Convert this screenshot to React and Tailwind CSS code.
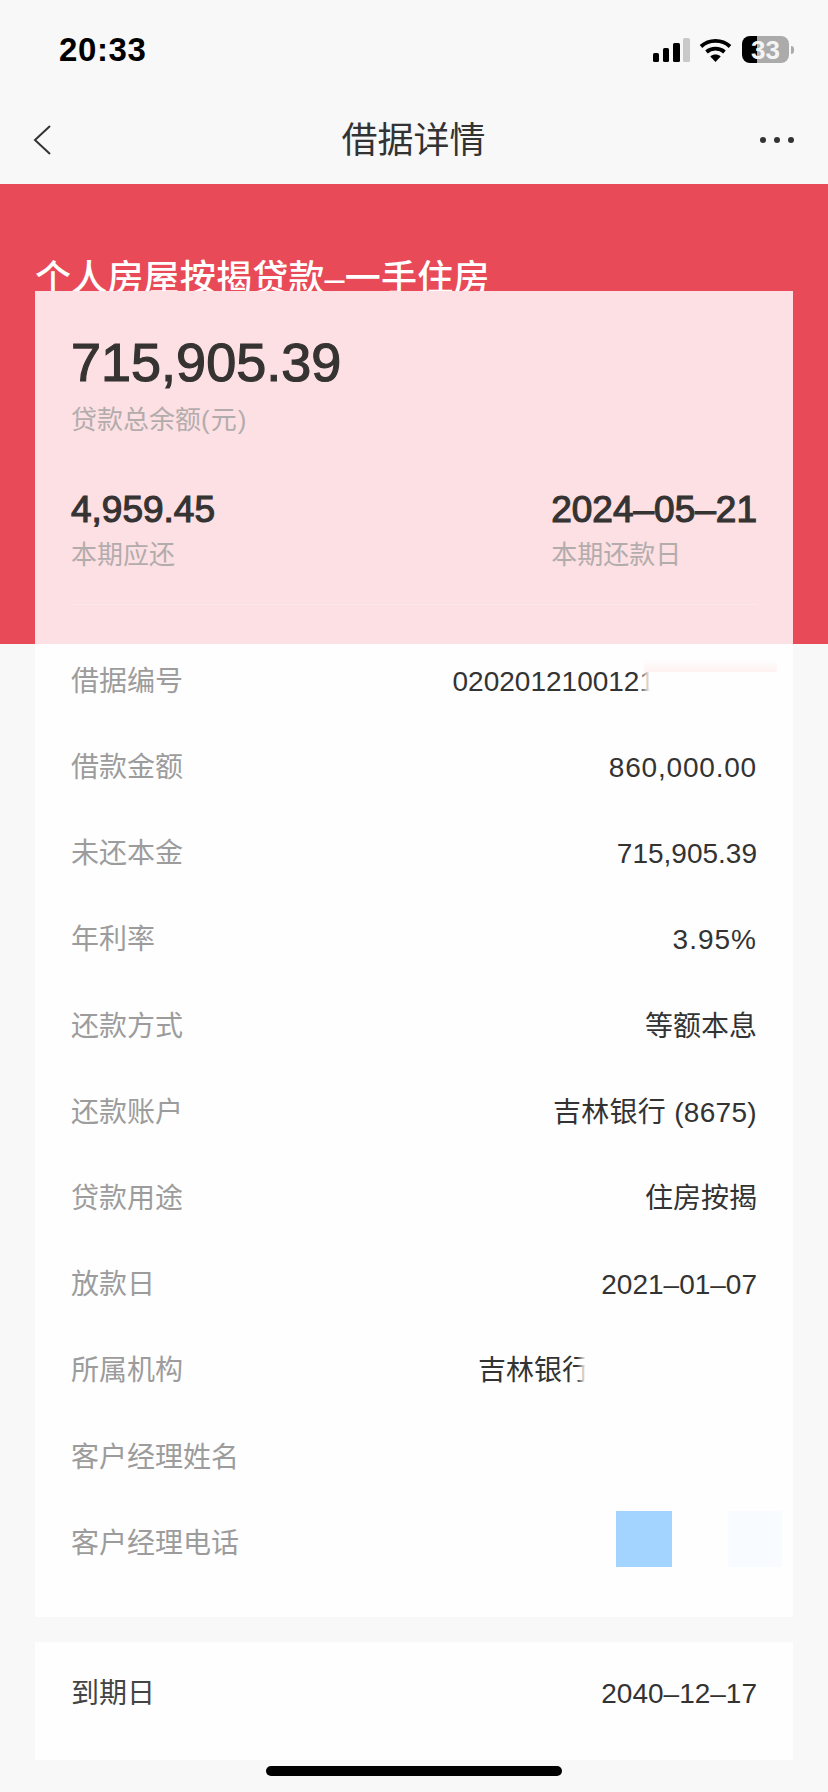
const FONT = "font-['Liberation_Sans','Noto_Sans_CJK_SC',sans-serif]";
const AMOUNT = "font-normal text-[#363333] [-webkit-text-stroke:1.2px_#363333]";

function Row({ label, children, first = false }) {
  return (
    <div className={`relative flex items-center justify-between ${first ? "h-[80px] pb-[4px]" : "h-[86.2px] pt-[2px]"}`}>
      <span className="text-[28px] leading-[40px] text-[#9c9c9c]">{label}</span>
      {children}
    </div>
  );
}

function Value({ children, className = "" }) {
  return <span className={`text-[28px] leading-[40px] text-[#333] ${className}`}>{children}</span>;
}

function Wifi() {
  return (
    <svg width="33" height="24" viewBox="0 0 33 24" fill="none" stroke="#000" strokeWidth="3.8">
      <path d="M2 8.5C10 1 23 1 31 8.5" />
      <path d="M7.5 14C12.5 9.6 20.5 9.6 25.5 14" />
      <path d="M16.5 24l-5.2-5.6c3-2.4 7.4-2.4 10.4 0z" fill="#000" stroke="none" />
    </svg>
  );
}

function Signal() {
  return (
    <svg width="37" height="24" viewBox="0 0 37 24">
      <rect x="0" y="15" width="6" height="9" rx="1.5" fill="#000" />
      <rect x="10" y="10" width="6" height="14" rx="1.5" fill="#000" />
      <rect x="20" y="5" width="7" height="19" rx="1.5" fill="#000" />
      <rect x="30" y="0" width="7" height="24" rx="1.5" fill="#c9c9c9" />
    </svg>
  );
}

export default function App() {
  return (
    <div className={`${FONT} relative h-[1792px] w-[828px] overflow-hidden bg-[#f8f8f8]`}>
      {/* status bar */}
      <div className="flex h-[96px] items-center justify-between pl-[59px] pr-[34px] pt-[3px]">
        <span className="text-[33px] font-bold leading-[40px] tracking-[0.6px] text-black">20:33</span>
        <div className="flex items-center">
          <Signal />
          <div className="ml-[9px]"><Wifi /></div>
          <div className="ml-[10px] flex h-[27px] w-[47px] items-center justify-center rounded-[8px] bg-[linear-gradient(90deg,#000_15px,#ababab_15px)] text-[26px] font-bold leading-none text-[#f4f4f4]">
            33
          </div>
          <div className="ml-[2px] h-[8px] w-[3px] rounded-r-[3px] bg-[#ababab]" />
        </div>
      </div>

      {/* nav */}
      <div className="flex h-[88px] items-center pl-[33px] pr-[34px]">
        <div className="flex-1">
          <svg className="block" width="18" height="30" viewBox="0 0 18 30" fill="none" stroke="#333" strokeWidth="2">
            <path d="M17 1L2 15l15 14" />
          </svg>
        </div>
        <span className="pt-[2px] text-[36px] leading-[48px] text-[#333]">借据详情</span>
        <div className="flex flex-1 justify-end gap-[8px]">
          <span className="h-[6px] w-[6px] rounded-full bg-[#333]" />
          <span className="h-[6px] w-[6px] rounded-full bg-[#333]" />
          <span className="h-[6px] w-[6px] rounded-full bg-[#333]" />
        </div>
      </div>

      {/* red hero */}
      <div className="h-[460px] bg-[#e94a58] pl-[35px] pt-[75px]">
        <div className="text-[36px] font-medium leading-[40px] tracking-[0.2px] text-white">个人房屋按揭贷款–一手住房</div>
      </div>

      {/* main card */}
      <div className="relative mx-[35px] -mt-[353px]">
        <div className="h-[353px] bg-[#fde0e3] px-[36px] pt-[45px]">
          <div className={`text-[54px] leading-[52px] ${AMOUNT}`}>715,905.39</div>
          <div className="mt-[14px] text-[26px] leading-[36px] text-[#b3acad]">
            贷款总余额<span className="tracking-[1px]">(元)</span>
          </div>
          <div className="mt-[50px] flex justify-between border-b border-dotted border-[#fdeced] pb-[31px]">
            <div>
              <div className={`text-[37px] leading-[44px] ${AMOUNT}`}>4,959.45</div>
              <div className="mt-[5px] text-[26px] leading-[36px] text-[#b3acad]">本期应还</div>
            </div>
            <div>
              <div className={`text-[37px] leading-[44px] ${AMOUNT}`}>2024–05–21</div>
              <div className="mt-[5px] text-[26px] leading-[36px] text-[#b3acad]">本期还款日</div>
            </div>
          </div>
        </div>

        <div className="bg-[#fefefe] px-[36px] pb-[31px]">
          <Row label="借据编号" first>
            <div className="relative mr-[102px] whitespace-nowrap text-[28px] leading-[40px] text-[#333]">
              0202012100121
              <div className="absolute inset-y-0 left-[186px] w-[24px] bg-[linear-gradient(90deg,transparent,#fefefe_45%)]" />
            </div>
            <div className="absolute -right-[20px] top-[16px] h-[12px] w-[133px] rounded-b-[2px] bg-gradient-to-b from-transparent to-[#fff1f1]" />
          </Row>
          <Row label="借款金额"><Value className="tracking-[0.8px]">860,000.00</Value></Row>
          <Row label="未还本金"><Value>715,905.39</Value></Row>
          <Row label="年利率"><Value className="tracking-[1px]">3.95%</Value></Row>
          <Row label="还款方式"><Value>等额本息</Value></Row>
          <Row label="还款账户"><Value className="tracking-[0.3px]">吉林银行 (8675)</Value></Row>
          <Row label="贷款用途"><Value>住房按揭</Value></Row>
          <Row label="放款日"><Value>2021–01–07</Value></Row>
          <Row label="所属机构">
            <div className="relative mr-[167px] whitespace-nowrap text-[28px] leading-[40px] text-[#333]">
              吉林银行
              <div className="absolute inset-y-0 left-[99px] w-[14px] bg-[linear-gradient(90deg,transparent,#fefefe_60%)]" />
            </div>
          </Row>
          <Row label="客户经理姓名" />
          <Row label="客户经理电话">
            <div className="-mr-[25px] mb-[10px] flex items-center gap-[56px]">
              <div className="h-[56px] w-[56px] bg-[#a3d4ff]" />
              <div className="h-[56px] w-[54px] bg-[#f8fbff]" />
            </div>
          </Row>
        </div>

        <div className="mt-[25px] flex h-[118px] items-center justify-between bg-[#fefefe] px-[36px] pb-[14px]">
          <span className="text-[28px] leading-[40px] text-[#444]">到期日</span>
          <Value>2040–12–17</Value>
        </div>
      </div>

      {/* home indicator */}
      <div className="mx-auto mt-[6px] h-[10px] w-[296px] rounded-full bg-black" />
    </div>
  );
}
